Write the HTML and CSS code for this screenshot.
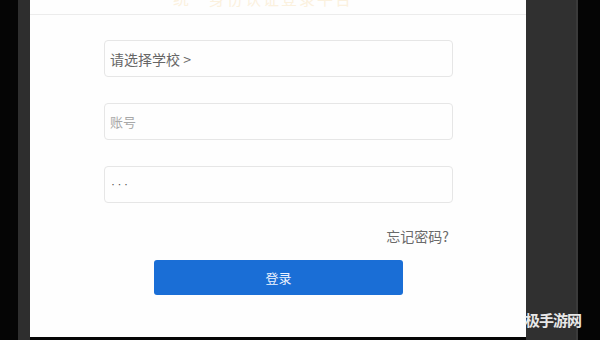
FILE: index.html
```html
<!DOCTYPE html>
<html lang="zh">
<head>
<meta charset="utf-8">
<title>登录</title>
<link rel="stylesheet" href="styles.css">
</head>
<body>
<div class="screen">
  <div class="edge-black-left"></div>
  <div class="edge-gray-left"></div>
  <div class="card">
    <div class="header"><span class="title">统一身份认证登录平台</span></div>
    <div class="form">
      <div class="field"><span class="ph school">请选择学校 &gt;</span></div>
      <div class="field"><span class="ph">账号</span></div>
      <div class="field"><span class="ph dots">•••</span></div>
      <div class="forgot">忘记密码?</div>
      <div class="btn">登录</div>
    </div>
  </div>
  <div class="edge-gray-right"></div>
  <div class="edge-black-right"></div>
  <div class="watermark">极手游网</div>
</div>
</body>
</html>
```
FILE: styles.css
```css
html, body {
  margin: 0;
  padding: 0;
  background: #050505;
}
body {
  width: 600px;
  height: 340px;
  overflow: hidden;
  font-family: "Noto Sans CJK SC", "Noto Sans", sans-serif;
}
.screen {
  position: relative;
  display: flex;
  width: 600px;
  height: 340px;
}
.edge-black-left { width: 18px; background: #050505; }
.edge-gray-left { width: 12px; background: #2e2e2e; }
.edge-gray-right { width: 52px; background: #303030; border-right: 2px solid #3a3a3a; box-sizing: border-box; }
.edge-black-right { width: 22px; background: #050505; }
.card {
  width: 496px;
  height: 337px;
  background: #fefefe;
  display: flex;
  flex-direction: column;
}
.header {
  height: 14px;
  border-bottom: 1px solid #ececec;
  overflow: hidden;
  display: flex;
  justify-content: center;
}
.title {
  margin-top: -12px;
  margin-left: -30px;
  font-size: 16px;
  line-height: 20px;
  color: #fbf1de;
  letter-spacing: 2px;
}
.form {
  display: flex;
  flex-direction: column;
  padding: 25px 0 0 74px;
  width: 349px;
}
.field {
  height: 35px;
  border: 1px solid #e6e6e6;
  border-radius: 4px;
  display: flex;
  align-items: center;
  padding-left: 5px;
  margin-bottom: 26px;
}
.ph {
  font-size: 13px;
  color: #a8a8a8;
}
.ph.school {
  font-size: 14px;
  color: #666;
}
.ph.dots {
  color: #444;
  font-size: 6px;
  letter-spacing: 0.5px;
}
.forgot {
  margin-top: -2px;
  align-self: flex-end;
  margin-right: 4px;
  font-size: 14px;
  color: #6a6a6a;
  line-height: 18px;
}
.btn {
  margin-top: 15px;
  margin-left: 50px;
  width: 249px;
  height: 35px;
  background: #1a6ed6;
  border-radius: 3px;
  color: #eef4ff;
  font-size: 13px;
  display: flex;
  align-items: center;
  justify-content: center;
}
.watermark {
  position: absolute;
  left: 525px;
  top: 310px;
  font-size: 15px;
  font-weight: 700;
  color: #e8e8e8;
  letter-spacing: -1px;
  line-height: 20px;
}
```
